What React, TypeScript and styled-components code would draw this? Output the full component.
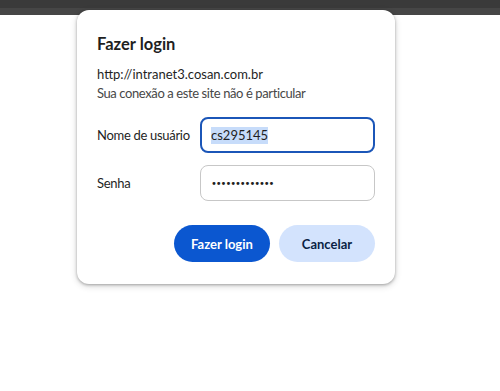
import React from "react";
import styled, { createGlobalStyle } from "styled-components";

const Global = createGlobalStyle`
  html, body { margin: 0; padding: 0; background: #ffffff; }
  body { font-family: "Lato", "Noto Sans", sans-serif; color: #1f1f1f; }
`;

const Page = styled.div`
  position: relative;
  width: 500px;
  height: 391px;
  overflow: hidden;
  background: #ffffff;
`;

const TopBar = styled.div`
  height: 15px;
  display: flex;
  flex-direction: column;
`;

const BarStrip = styled.div<{ $h: number; $c: string }>`
  height: ${(p) => p.$h}px;
  background: ${(p) => p.$c};
`;

const Dialog = styled.div`
  position: absolute;
  top: 10px;
  left: 77px;
  width: 318px;
  height: 274px;
  box-sizing: border-box;
  background: #ffffff;
  border-radius: 12px;
  box-shadow: 0 1px 3px rgba(0, 0, 0, 0.3), 0 2px 6px 1px rgba(0, 0, 0, 0.12);
  padding: 22px 20px 22px 20px;
  display: flex;
  flex-direction: column;
`;

const Title = styled.h1`
  margin: 0;
  font-size: 16.5px;
  font-weight: 700;
  line-height: 24px;
  color: #1f1f1f;
`;

const Info = styled.div`
  margin-top: 9px;
  display: flex;
  flex-direction: column;
`;

const InfoLine = styled.div`
  font-size: 13px;
  line-height: 19px;
  color: #1f1f1f;
`;

const SubLine = styled(InfoLine)`
  color: #474747;
  letter-spacing: -0.4px;
  line-height: 18px;
`;

const Form = styled.div`
  margin-top: 15px;
  display: flex;
  flex-direction: column;
  gap: 12px;
`;

const Row = styled.div`
  display: flex;
  align-items: center;
`;

const Label = styled.div`
  width: 103px;
  font-size: 13px;
  letter-spacing: -0.3px;
  color: #1f1f1f;
`;

const Field = styled.div<{ $focused?: boolean }>`
  width: 175px;
  height: 36px;
  box-sizing: border-box;
  border-radius: 8px;
  border: ${(p) => (p.$focused ? "2px solid #1b56b8" : "1px solid #c7c7c7")};
  padding-left: ${(p) => (p.$focused ? "9px" : "10px")};
  display: flex;
  align-items: center;
  font-size: 13px;
  color: #1f1f1f;
`;

const Selected = styled.span`
  background: #c7dcfa;
  line-height: 17px;
`;

const Dots = styled.span`
  font-family: "DejaVu Sans", sans-serif;
  font-size: 10px;
  letter-spacing: -1.1px;
  color: #1f1f1f;
`;

const Actions = styled.div`
  margin-top: auto;
  display: flex;
  justify-content: flex-end;
  gap: 9px;
`;

const Button = styled.button<{ $primary?: boolean }>`
  width: 96px;
  height: 37px;
  border: none;
  border-radius: 19px;
  font-family: "Lato", "Noto Sans", sans-serif;
  font-size: 13px;
  font-weight: 700;
  background: ${(p) => (p.$primary ? "#0b57d0" : "#d3e3fd")};
  color: ${(p) => (p.$primary ? "#ffffff" : "#0a1f44")};
  cursor: pointer;
  padding: 0;
`;

export default function App() {
  return (
    <Page>
      <Global />
      <TopBar>
        <BarStrip $h={8} $c="#3a3a3a" />
        <BarStrip $h={7} $c="#464646" />
      </TopBar>
      <Dialog>
        <Title>Fazer login</Title>
        <Info>
          <InfoLine>http://intranet3.cosan.com.br</InfoLine>
          <SubLine>Sua conexão a este site não é particular</SubLine>
        </Info>
        <Form>
          <Row>
            <Label>Nome de usuário</Label>
            <Field $focused>
              <Selected>cs295145</Selected>
            </Field>
          </Row>
          <Row>
            <Label>Senha</Label>
            <Field>
              <Dots>{"•".repeat(13)}</Dots>
            </Field>
          </Row>
        </Form>
        <Actions>
          <Button $primary>Fazer login</Button>
          <Button>Cancelar</Button>
        </Actions>
      </Dialog>
    </Page>
  );
}
